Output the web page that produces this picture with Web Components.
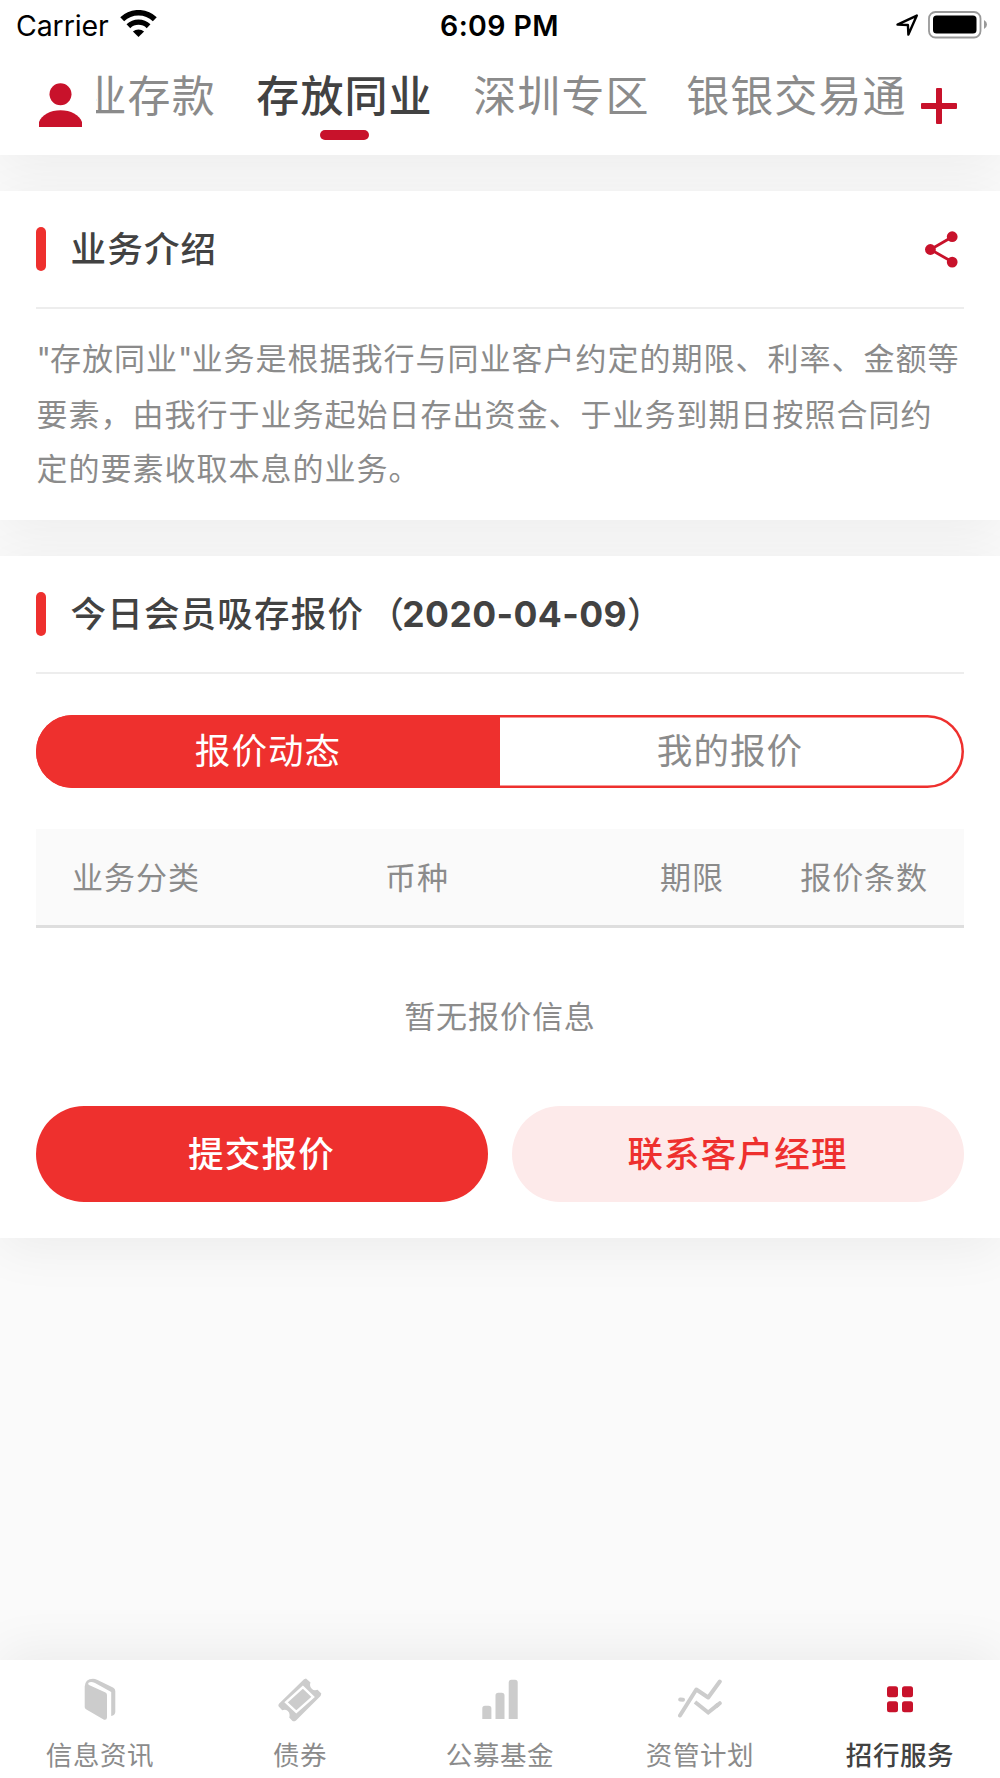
<!DOCTYPE html>
<html lang="zh-CN">
<head>
<meta charset="UTF-8">
<title>存放同业</title>
<style>
  html, body {
    margin: 0;
    padding: 0;
  }

  body {
    background: #fafafa;
    font-family: Inter, "Noto Sans CJK SC", sans-serif;
    color: #8b8b8b;
    --red: #ee302e;
    --brand: #c8122b;
    --dark: #424242;
  }

  .quote {
    letter-spacing: -0.9px;
  }

  .second {
    padding-top: 1px;
    margin-bottom: -1px;
  }
</style>
</head>
<body>
<bank-app>
  <status-bar slot="top" carrier="Carrier" time="6:09 PM"></status-bar>
  <channel-nav slot="top">
    <channel-tab class="first">业存款</channel-tab>
    <channel-tab active>存放同业</channel-tab>
    <channel-tab>深圳专区</channel-tab>
    <channel-tab class="last">银银交易通</channel-tab>
  </channel-nav>

  <info-card name="业务介绍">
    <app-icon slot="action" name="share"></app-icon>
    <intro-text>
      <span><span class="quote">"</span>存放同业<span class="quote">"</span>业务是根据我行与同业客户约定的期限、利率、金额等</span>
      <span class="second">要素，由我行于业务起始日存出资金、于业务到期日按照合同约</span>
      <span>定的要素收取本息的业务。</span>
    </intro-text>
  </info-card>

  <info-card name="今日会员吸存报价（2020-04-09）">
    <quote-panel></quote-panel>
  </info-card>

  <tab-bar slot="bottom">
    <tab-item icon="book">信息资讯</tab-item>
    <tab-item icon="ticket">债券</tab-item>
    <tab-item icon="bars">公募基金</tab-item>
    <tab-item icon="trend">资管计划</tab-item>
    <tab-item icon="grid" active>招行服务</tab-item>
  </tab-bar>
</bank-app>

<script>
const icons = {
  wifi: `<svg width="37" height="28" viewBox="0 0 37 28">
    <path d="M2.2 9.3a23.5 23.5 0 0 1 32.6 0" fill="none" stroke="#000" stroke-width="5.6"/>
    <path d="M8.4 16.2a14.6 14.6 0 0 1 20.2 0" fill="none" stroke="#000" stroke-width="5.4"/>
    <path d="M12.9 21.6a8.2 8.2 0 0 1 11.2 0L18.5 27z"/></svg>`,
  location: `<svg width="23" height="23" viewBox="0 0 23 23">
    <path d="M1.5 10.6L20.8 1.6L12.4 20.6L11.9 11z" fill="none" stroke="#000" stroke-width="2.4" stroke-linejoin="round"/></svg>`,
  battery: `<svg width="60" height="28" viewBox="0 0 60 28">
    <rect x="1" y="1" width="51.5" height="25.5" rx="6.5" fill="none" stroke="#999" stroke-width="1.8"/>
    <rect x="5" y="4.6" width="43.5" height="18" rx="3.5"/>
    <path d="M56 9q3 1.7 3 4.5t-3 4.5z" fill="#999"/></svg>`,
  user: `<svg width="44" height="45" viewBox="0 0 44 45" fill="#c8122b">
    <circle cx="22.5" cy="11.3" r="11"/>
    <path d="M1 44V39C3.5 32 12.5 27.3 22.5 27.3S41.5 32 44 39v5z"/></svg>`,
  plus: `<svg width="36" height="36" viewBox="0 0 36 36" fill="#c8122b">
    <rect x="15" width="6" height="36" rx="1"/><rect y="15" width="36" height="6" rx="1"/></svg>`,
  share: `<svg width="33" height="37" viewBox="0 0 33 37" fill="#c8122b">
    <path d="M27.5 5.8L5.5 18.5L27.5 31" fill="none" stroke="#c8122b" stroke-width="2.8"/>
    <circle cx="27.2" cy="5.7" r="5.4"/><circle cx="5.4" cy="18.5" r="5.4"/><circle cx="27.2" cy="31.1" r="5.4"/></svg>`,
  book: `<svg width="44" height="44" viewBox="0 0 44 44" fill="#ccc">
    <path d="M6.7 8.5Q7 1 15 .7Q17 .7 19 1.8L35 9.5Q37.3 10.7 37.3 13V34Q37 37.5 33.2 38V14L17 5Q13 3 10.5 4.8Q9.5 6 11 7L27.5 14.6Q29 15.5 29 17V39.5Q28.8 42.5 26 41.7L8 31.2Q6.7 30.2 6.7 29z"/></svg>`,
  ticket: `<svg width="44" height="44" viewBox="0 0 44 44" fill="#ccc">
    <path d="M28 .6L32.5 4.5Q31 8.5 34 11Q36 13 39.5 11.8L43.3 15.5Q43 17.5 42.3 18.2L18 42.5Q16 44 14.5 42.9L11.2 39.5Q12.5 35.5 9.8 33Q7.5 31 4.2 32.2L.7 28.5Q-.2 27 1.2 25.5L26 1.2z"/>
    <path d="M24.9 9.2L35.1 18.9L18.3 33.9L8.1 24.3z" fill="none" stroke="#fff" stroke-width="2.4"/></svg>`,
  bars: `<svg width="44" height="44" viewBox="0 0 44 44" fill="#ccc">
    <path d="M4.3 41V30.5q0-2.7 2.7-2.7h3.7q2.7 0 2.7 2.7V41zM17.5 41V17.5q0-2.7 2.7-2.7h3.6q2.7 0 2.7 2.7V41zM30.7 41V4.5q0-2.7 2.7-2.7h3.6q2.7 0 2.7 2.7V41z"/></svg>`,
  trend: `<svg width="44" height="44" viewBox="0 0 44 44" fill="none" stroke="#ccc" stroke-width="4" stroke-linecap="round" stroke-linejoin="round">
    <path d="M2 37.5L18.3 11.5L30.2 19.5L41.8 3.5"/>
    <path d="M17 24L30.2 34.5L40 26.6" stroke-linejoin="miter" stroke-linecap="butt"/>
    <path d="M38.5 27.9L41.8 25.2M2.2 21.5L5 21.8"/></svg>`,
  grid: `<svg width="44" height="44" viewBox="0 0 44 44" fill="#c8122b">
    <rect x="9" y="8.3" width="11" height="11" rx="2.5"/><rect x="24" y="8.3" width="11" height="11" rx="2.5"/>
    <rect x="9" y="23.3" width="11" height="11" rx="2.5"/><rect x="24" y="23.3" width="11" height="11" rx="2.5"/></svg>`
};

// soft shadow kept below every white block, so neighbours stay clean
const softShadow = `
    content: "";
    position: absolute;
    inset: 0;
    z-index: -1;
    box-shadow: 0 var(--shadow-y, 10px) 50px rgba(0, 0, 0, 0.057);
`;

class BaseElement extends HTMLElement {
  constructor() {
    super();
    this.attachShadow({ mode: "open" });
  }

  connectedCallback() {
    const template = document.createElement("template");
    template.innerHTML = `<style>* { box-sizing: border-box; }${this.getStyles()}</style>${this.getTemplate()}`;
    this.shadowRoot.appendChild(template.content.cloneNode(true));
  }
}

class AppIcon extends BaseElement {
  getStyles() {
    return `
      :host { display: block; flex: none; }
      svg { display: block; }
    `;
  }

  getTemplate() {
    return icons[this.getAttribute("name")];
  }
}

class BankApp extends BaseElement {
  getStyles() {
    return `
      :host {
        display: flex;
        flex-direction: column;
        height: 1778px;
        width: 1000px;
        overflow: hidden;
      }
      header {
        position: relative;
        height: 155px;
        background: #fff;
      }
      header::before { ${softShadow} }
      main {
        flex: 1;
        display: flex;
        flex-direction: column;
        gap: 36px;
        padding-top: 36px;
      }
    `;
  }

  getTemplate() {
    return `
      <header><slot name="top"></slot></header>
      <main><slot></slot></main>
      <slot name="bottom"></slot>
    `;
  }
}

class StatusBar extends BaseElement {
  getStyles() {
    return `
      :host {
        display: grid;
        grid-template-columns: 1fr auto 1fr;
        align-items: center;
        height: 50px;
        padding: 0 12px 0 16px;
        box-sizing: border-box;
        color: #000;
        font-size: 28.5px;
        line-height: 51px;
      }
      div { display: flex; align-items: center; }
      .left { gap: 11px; }
      .left app-icon { margin-top: -3px; }
      .right { justify-content: flex-end; gap: 9px; }
      .right app-icon { margin-top: -1px; }
      .carrier { letter-spacing: -0.1px; }
      .time { font-weight: 600; letter-spacing: 0.4px; margin-left: -5px; }
    `;
  }

  getTemplate() {
    return `
      <div class="left"><span class="carrier">${this.getAttribute("carrier")}</span><app-icon name="wifi"></app-icon></div>
      <span class="time">${this.getAttribute("time")}</span>
      <div class="right"><app-icon name="location"></app-icon><app-icon name="battery"></app-icon></div>
    `;
  }
}

class ChannelNav extends BaseElement {
  getStyles() {
    return `
      :host {
        display: flex;
        height: 105px;
        padding: 0 43px 0 38px;
        box-sizing: border-box;
      }
      .user { margin-top: 33px; }
      .add { margin-top: 37.5px; margin-left: auto; }
      .scroller {
        display: flex;
        gap: 40.5px;
        width: 812px;
        margin-left: 14px;
        overflow: hidden;
      }
      ::slotted(.first) { margin-left: -12.5px; }
      ::slotted(.last) { margin-left: -4px; }
    `;
  }

  getTemplate() {
    return `
      <app-icon class="user" name="user"></app-icon>
      <div class="scroller"><slot></slot></div>
      <app-icon class="add" name="plus"></app-icon>
    `;
  }
}

class ChannelTab extends BaseElement {
  getStyles() {
    return `
      :host {
        display: flex;
        flex-direction: column;
        align-items: center;
        flex: none;
        padding-top: 16px;
        font-size: 43px;
        line-height: 60px;
        letter-spacing: 1.1px;
        white-space: nowrap;
      }
      :host([active]) { color: var(--dark); font-weight: 500; }
      i { display: none; width: 49px; height: 10px; margin-top: 4px; border-radius: 5px; background: var(--brand); }
      :host([active]) i { display: block; }
    `;
  }

  getTemplate() {
    return `<span><slot></slot></span><i></i>`;
  }
}

class InfoCard extends BaseElement {
  getStyles() {
    return `
      :host {
        display: block;
        position: relative;
        padding: 0 36px;
        background: #fff;
      }
      :host::before { ${softShadow} }
      .head {
        display: flex;
        align-items: center;
        height: 118px;
        border-bottom: 2px solid #ededed;
      }
      .mark { width: 10px; height: 44px; border-radius: 5px; background: var(--red); }
      h2 {
        flex: 1;
        margin: 2px 0 0 24.5px;
        color: var(--dark);
        font-size: 35.5px;
        font-weight: 500;
        line-height: 50px;
        letter-spacing: 1.2px;
      }
      /* moves the full-width bracket closer to the date */
      .open { margin-left: 4.5px; letter-spacing: -1.8px; }
      b { font-weight: 700; letter-spacing: 0.4px; }
      ::slotted([slot="action"]) { margin-right: 6px; }
    `;
  }

  getTemplate() {
    const name = this.getAttribute("name").replace(/（([\d-]+)/, '<span class="open">（</span><b>$1</b>');
    return `
      <div class="head"><span class="mark"></span><h2>${name}</h2><slot name="action"></slot></div>
      <slot></slot>
    `;
  }
}

class IntroText extends BaseElement {
  getStyles() {
    return `
      :host {
        display: flex;
        flex-direction: column;
        height: 210.5px;
        padding: 22px 0 0 0.5px;
        box-sizing: border-box;
        font-size: 31px;
        letter-spacing: 1px;
        line-height: 55px;
        white-space: nowrap;
      }
    `;
  }

  getTemplate() {
    return `<slot></slot>`;
  }
}

class QuotePanel extends BaseElement {
  getStyles() {
    return `
      :host { display: block; padding: 41px 0 36px; }
      .segment {
        display: grid;
        grid-template-columns: 1fr 1fr;
        height: 73px;
        border-radius: 37px;
        overflow: hidden;
        box-shadow: inset 0 0 0 2.5px var(--red);
        font-size: 35.5px;
        line-height: 74px;
        letter-spacing: 1.1px;
        text-align: center;
      }
      .segment span { padding-right: 4px; }
      .segment .on { padding: 0; background: var(--red); color: #fff; }
      .thead {
        display: grid;
        grid-template-columns: 200px 362px 188px 178px;
        height: 99px;
        margin-top: 41px;
        background: #fafafa;
        border-bottom: 3px solid #dedede;
        line-height: 98px;
        text-align: center;
      }
      .thead, .empty { font-size: 31px; letter-spacing: 0.94px; }
      .thead span:last-child { text-align: right; padding-right: 36px; }
      .empty { margin: 0; line-height: 178px; text-align: center; }
      .actions { display: grid; grid-template-columns: 1fr 1fr; gap: 24px; }
      button {
        height: 96px;
        padding: 0 1px 4px 0;
        border: 0;
        border-radius: 48px;
        background: var(--red);
        color: #fff;
        font: 500 35.5px Inter, "Noto Sans CJK SC", sans-serif;
        letter-spacing: 1.2px;
      }
      button.light { background: #fdeaea; color: var(--red); }
    `;
  }

  getTemplate() {
    return `
      <div class="segment"><span class="on">报价动态</span><span>我的报价</span></div>
      <div class="thead"><span>业务分类</span><span>币种</span><span>期限</span><span>报价条数</span></div>
      <p class="empty">暂无报价信息</p>
      <div class="actions"><button>提交报价</button><button class="light">联系客户经理</button></div>
    `;
  }
}

class TabBar extends BaseElement {
  getStyles() {
    return `
      :host {
        display: grid;
        grid-template-columns: repeat(5, 1fr);
        position: relative;
        height: 118px;
        background: #fff;
        --shadow-y: -10px;
      }
      :host::before { ${softShadow} }
    `;
  }

  getTemplate() {
    return `<slot></slot>`;
  }
}

class TabItem extends BaseElement {
  getStyles() {
    return `
      :host {
        display: flex;
        flex-direction: column;
        align-items: center;
        padding-top: 18px;
        font-size: 26.5px;
        line-height: 34px;
        letter-spacing: 0.6px;
      }
      :host([active]) { color: var(--dark); font-weight: 500; }
      span { margin-top: 16px; }
    `;
  }

  getTemplate() {
    return `<app-icon name="${this.getAttribute("icon")}"></app-icon><span><slot></slot></span>`;
  }
}

customElements.define("app-icon", AppIcon);
customElements.define("bank-app", BankApp);
customElements.define("status-bar", StatusBar);
customElements.define("channel-nav", ChannelNav);
customElements.define("channel-tab", ChannelTab);
customElements.define("info-card", InfoCard);
customElements.define("intro-text", IntroText);
customElements.define("quote-panel", QuotePanel);
customElements.define("tab-bar", TabBar);
customElements.define("tab-item", TabItem);
</script>
</body>
</html>
